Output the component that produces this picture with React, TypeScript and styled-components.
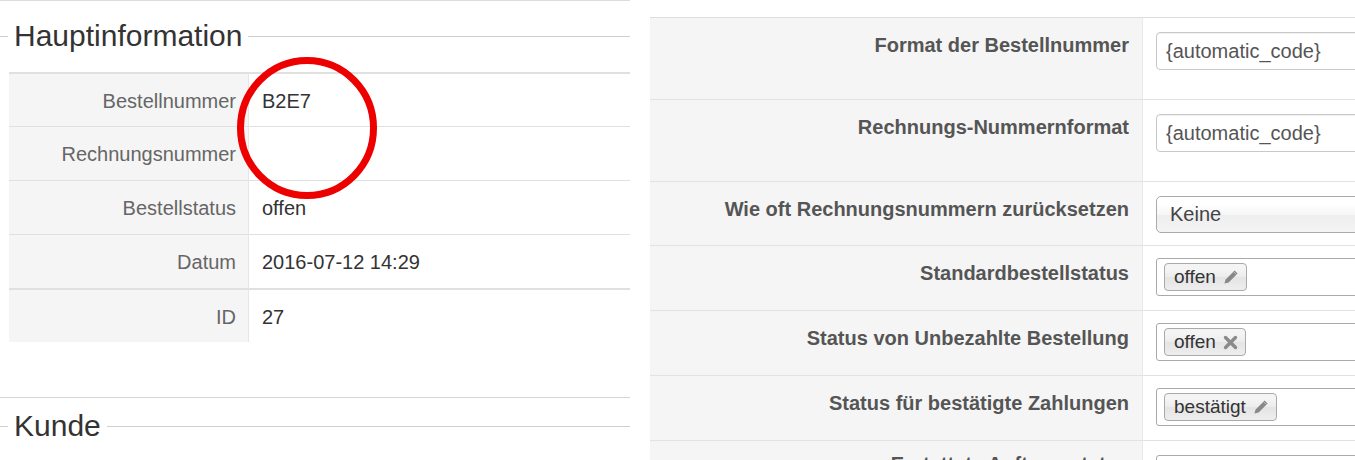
import React from "react";
import styled, { createGlobalStyle } from "styled-components";

const GlobalStyle = createGlobalStyle`
  html, body {
    margin: 0;
    padding: 0;
    background: #fff;
  }
  body {
    font-family: "Liberation Sans", Arial, sans-serif;
    color: #333;
  }
`;

const Page = styled.div`
  display: flex;
  gap: 20px;
  width: 1355px;
  height: 460px;
  overflow: hidden;
`;

const LeftPanel = styled.section`
  position: relative;
  width: 630px;
  flex-shrink: 0;
  border-top: 1px solid #dcdcdc;
`;

const Legend = styled.div<{ $top: number; $bottom: number }>`
  display: flex;
  align-items: center;
  margin: ${({ $top }) => $top}px 0 ${({ $bottom }) => $bottom}px;
  font-size: 30px;
  line-height: 36px;
  color: #333;

  &::before {
    content: "";
    width: 8px;
    margin-right: 6px;
    border-top: 1px solid #cfcfcf;
  }

  &::after {
    content: "";
    flex: 1;
    margin-left: 6px;
    border-top: 1px solid #cfcfcf;
  }
`;

const Divider = styled.div`
  margin-top: 55px;
  border-top: 1px solid #d4d4d4;
`;

const InfoTable = styled.div`
  margin-left: 9px;
  display: grid;
  grid-template-columns: 240px 1fr;
`;

const InfoLabel = styled.div<{ $thick?: boolean }>`
  box-sizing: border-box;
  height: 54px;
  display: flex;
  align-items: center;
  justify-content: flex-end;
  padding: 2px 12px 0 0;
  background: #f5f5f5;
  border-top: ${({ $thick }) => ($thick ? 2 : 1)}px solid #e0e0e0;
  border-right: 1px solid #e6e6e6;
  font-size: 20px;
  color: #666;
`;

const InfoValue = styled.div<{ $thick?: boolean }>`
  box-sizing: border-box;
  height: 54px;
  display: flex;
  align-items: center;
  padding: 2px 0 0 13px;
  border-top: ${({ $thick }) => ($thick ? 2 : 1)}px solid #e0e0e0;
  font-size: 20px;
  color: #333;
`;

const Marker = styled.svg`
  position: absolute;
  left: 237px;
  top: 56px;
`;

const RightPanel = styled.section`
  flex: 1;
  min-width: 0;
  margin-top: 17px;
  overflow: hidden;
`;

const SettingsTable = styled.div`
  display: grid;
  grid-template-columns: 493px 1fr;
  border-top: 1px solid #dedede;
`;

const SettingLabel = styled.div<{ $h: number; $pt?: number }>`
  box-sizing: border-box;
  height: ${({ $h }) => $h}px;
  padding: ${({ $pt }) => $pt ?? 14}px 13px 0 0;
  text-align: right;
  background: #f5f5f5;
  border-bottom: 1px solid #e2e2e2;
  border-right: 1px solid #e8e8e8;
  font-size: 20px;
  line-height: 26px;
  font-weight: bold;
  color: #555;
  white-space: nowrap;
`;

const SettingValue = styled.div<{ $h: number; $pt?: number }>`
  box-sizing: border-box;
  height: ${({ $h }) => $h}px;
  padding: ${({ $pt }) => $pt ?? 14}px 0 0 13px;
  border-bottom: 1px solid #e2e2e2;
  overflow: hidden;
`;

const TextInput = styled.div`
  box-sizing: border-box;
  width: 260px;
  height: 38px;
  display: flex;
  align-items: center;
  padding: 0 9px;
  border: 1px solid #c8c8c8;
  border-radius: 4px;
  box-shadow: inset 0 1px 1px rgba(0, 0, 0, 0.06);
  font-size: 20px;
  color: #555;
`;

const SelectBox = styled.div`
  box-sizing: border-box;
  width: 260px;
  height: 37px;
  display: flex;
  align-items: center;
  padding: 0 13px;
  border: 1px solid #aaa;
  border-radius: 5px;
  background: linear-gradient(#fff 20%, #f6f6f6 50%, #eee 52%, #f4f4f4);
  font-size: 20px;
  color: #444;
`;

const TagBox = styled.div`
  box-sizing: border-box;
  width: 260px;
  height: 38px;
  display: flex;
  align-items: center;
  gap: 4px;
  padding: 0 7px;
  border: 1px solid #aaa;
  border-radius: 3px;
  background: #fff;
`;

const Tag = styled.span`
  box-sizing: border-box;
  height: 28px;
  display: inline-flex;
  align-items: center;
  gap: 7px;
  padding: 0 7px 0 9px;
  border: 1px solid #aaa;
  border-radius: 4px;
  background: linear-gradient(#f4f4f4 20%, #ececec 50%, #e4e4e4 52%, #eee);
  font-size: 19px;
  color: #333;
  white-space: nowrap;
`;

const Pencil = () => (
  <svg width="16" height="16" viewBox="0 0 16 16">
    <path d="M11.6 1.4 L14.6 4.4 L5.6 13.4 L1.4 14.6 L2.6 10.4 Z" fill="#888" />
    <path d="M10.4 2.6 L13.4 5.6" stroke="#c4c4c4" strokeWidth="0.9" />
  </svg>
);

const Cross = () => (
  <svg width="15" height="15" viewBox="0 0 15 15">
    <path d="M2.5 2.5 L12.5 12.5 M12.5 2.5 L2.5 12.5" stroke="#8a8a8a" strokeWidth="3.4" strokeLinecap="round" />
  </svg>
);

const info = [
  { label: "Bestellnummer", value: "B2E7" },
  { label: "Rechnungsnummer", value: "" },
  { label: "Bestellstatus", value: "offen" },
  { label: "Datum", value: "2016-07-12 14:29" },
  { label: "ID", value: "27" },
];

export default function App() {
  return (
    <>
      <GlobalStyle />
      <Page>
        <LeftPanel>
          <Legend $top={17} $bottom={18}>Hauptinformation</Legend>
          <InfoTable>
            {info.map((row, i) => {
              const thick = i === 0 || i === 4;
              return (
                <React.Fragment key={row.label}>
                  <InfoLabel $thick={thick}>{row.label}</InfoLabel>
                  <InfoValue $thick={thick}>{row.value}</InfoValue>
                </React.Fragment>
              );
            })}
          </InfoTable>
          <Divider />
          <Legend $top={10} $bottom={0}>Kunde</Legend>
          <Marker width="140" height="142" viewBox="0 0 140 142">
            <ellipse cx="70" cy="71" rx="66.5" ry="67.5" fill="none" stroke="#ec0000" strokeWidth="7" />
          </Marker>
        </LeftPanel>

        <RightPanel>
          <SettingsTable>
            <SettingLabel $h={82}>Format der Bestellnummer</SettingLabel>
            <SettingValue $h={82}>
              <TextInput>{"{automatic_code}"}</TextInput>
            </SettingValue>

            <SettingLabel $h={82}>Rechnungs-Nummernformat</SettingLabel>
            <SettingValue $h={82}>
              <TextInput>{"{automatic_code}"}</TextInput>
            </SettingValue>

            <SettingLabel $h={64}>Wie oft Rechnungsnummern zurücksetzen</SettingLabel>
            <SettingValue $h={64}>
              <SelectBox>Keine</SelectBox>
            </SettingValue>

            <SettingLabel $h={65}>Standardbestellstatus</SettingLabel>
            <SettingValue $h={65} $pt={12}>
              <TagBox>
                <Tag>offen <Pencil /></Tag>
              </TagBox>
            </SettingValue>

            <SettingLabel $h={65}>Status von Unbezahlte Bestellung</SettingLabel>
            <SettingValue $h={65} $pt={12}>
              <TagBox>
                <Tag>offen <Cross /></Tag>
              </TagBox>
            </SettingValue>

            <SettingLabel $h={65}>Status für bestätigte Zahlungen</SettingLabel>
            <SettingValue $h={65} $pt={12}>
              <TagBox>
                <Tag>bestätigt <Pencil /></Tag>
              </TagBox>
            </SettingValue>

            <SettingLabel $h={65} $pt={10}>Erstattete Auftragsstatus</SettingLabel>
            <SettingValue $h={65} $pt={14}>
              <TagBox>
                <Tag>storniert <Pencil /></Tag>
                <Tag>erstattet <Pencil /></Tag>
              </TagBox>
            </SettingValue>
          </SettingsTable>
        </RightPanel>
      </Page>
    </>
  );
}
